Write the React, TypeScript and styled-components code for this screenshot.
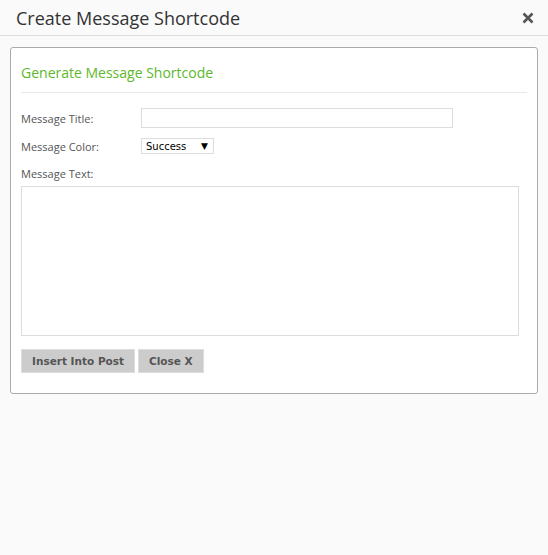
import React from 'react';
import styled, { createGlobalStyle } from 'styled-components';

const GlobalStyle = createGlobalStyle`
  html, body {
    margin: 0;
    padding: 0;
    background: #fafafa;
  }
  body {
    font-family: "Open Sans", "Liberation Sans", sans-serif;
  }
`;

const Page = styled.div`
  width: 548px;
  height: 555px;
  background: #fafafa;
`;

const Header = styled.div`
  height: 36px;
  display: flex;
  align-items: center;
  justify-content: space-between;
  padding: 0 14px 0 16px;
  border-bottom: 1px solid #dddddd;
  box-sizing: border-box;
`;

const Title = styled.h1`
  margin: 0;
  font-size: 18px;
  font-weight: 400;
  color: #333333;
  padding-top: 1px;
`;

const CloseIcon = styled.span`
  display: flex;
  width: 12px;
  height: 12px;
  margin-top: 1px;
  cursor: pointer;
`;

const Body = styled.div`
  padding: 11px 10px 0 10px;
`;

const Panel = styled.div`
  background: #ffffff;
  border: 1px solid #aaaaaa;
  border-radius: 3px;
  padding: 0 10px 20px 10px;
  width: 528px;
  box-sizing: border-box;
`;

const PanelHeading = styled.h2`
  margin: 0;
  padding: 16px 0 10px;
  font-size: 14px;
  font-weight: 400;
  color: #5db82b;
  border-bottom: 1px solid #e8e8e8;
  line-height: 18px;
`;

const Fields = styled.div`
  padding-top: 15px;
  display: flex;
  flex-direction: column;
`;

const Row = styled.div<{ $gap?: number }>`
  display: flex;
  align-items: center;
  margin-bottom: ${(p) => p.$gap ?? 10}px;
`;

const Label = styled.label<{ $width?: number }>`
  width: ${(p) => p.$width ?? 120}px;
  font-size: 11px;
  color: #555555;
`;

const TextInput = styled.input`
  width: 312px;
  height: 20px;
  box-sizing: border-box;
  border: 1px solid #dddddd;
  background: #fff;
  padding: 0 4px;
  outline: none;
`;

const SelectBox = styled.div`
  width: 73px;
  height: 16px;
  box-sizing: border-box;
  border: 1px solid #dddddd;
  display: flex;
  align-items: center;
  justify-content: space-between;
  padding: 0 5px 0 4px;
  font-family: "DejaVu Sans", Verdana, sans-serif;
  font-size: 10px;
  color: #000;
  background: #fff;
`;

const Arrow = styled.span`
  font-size: 9px;
`;

const TextArea = styled.textarea`
  width: 498px;
  height: 150px;
  box-sizing: border-box;
  border: 1px solid #dddddd;
  resize: none;
  outline: none;
  margin-top: 5px;
  display: block;
`;

const Buttons = styled.div`
  display: flex;
  gap: 3px;
  margin-top: 13px;
`;

const Button = styled.button`
  height: 24px;
  box-sizing: border-box;
  background: #cccccc;
  border: 1px solid #dddddd;
  color: #555555;
  font-family: "DejaVu Sans", Verdana, sans-serif;
  font-weight: 700;
  font-size: 10.5px;
  padding: 0 10px;
  cursor: pointer;
`;

export default function App() {
  return (
    <Page>
      <GlobalStyle />
      <Header>
        <Title>Create Message Shortcode</Title>
        <CloseIcon>
          <svg width="12" height="12" viewBox="0 0 12 12">
            <path d="M1.5 1.5 L10.5 10.5 M10.5 1.5 L1.5 10.5" stroke="#555" strokeWidth="2.6" strokeLinecap="butt" />
          </svg>
        </CloseIcon>
      </Header>
      <Body>
        <Panel>
          <PanelHeading>Generate Message Shortcode</PanelHeading>
          <Fields>
            <Row>
              <Label>Message Title:</Label>
              <TextInput type="text" />
            </Row>
            <Row $gap={12}>
              <Label>Message Color:</Label>
              <SelectBox>
                <span>Success</span>
                <Arrow>▼</Arrow>
              </SelectBox>
            </Row>
            <Label $width={200}>Message Text:</Label>
            <TextArea />
            <Buttons>
              <Button>Insert Into Post</Button>
              <Button>Close X</Button>
            </Buttons>
          </Fields>
        </Panel>
      </Body>
    </Page>
  );
}
